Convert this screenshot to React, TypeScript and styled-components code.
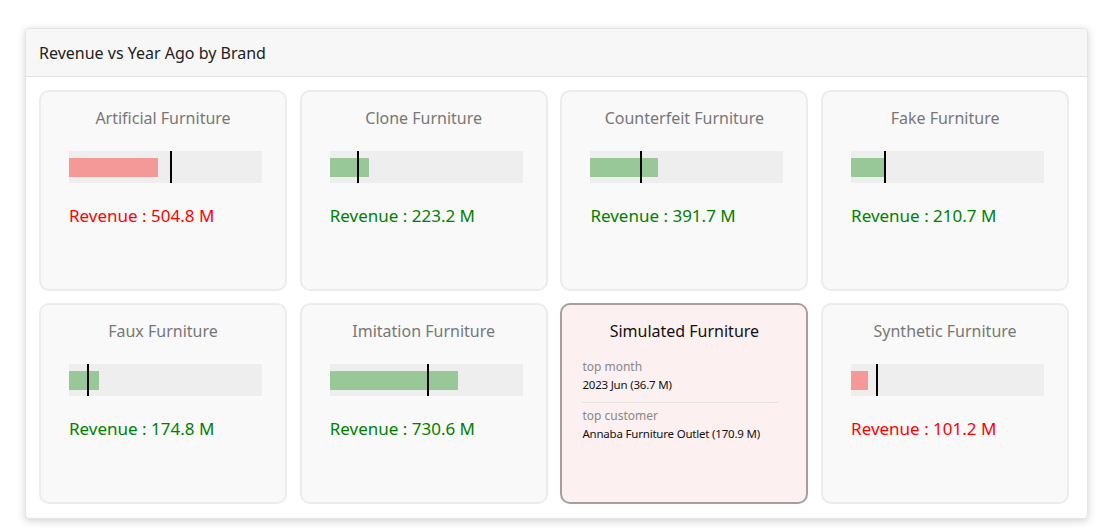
import React from "react";
import styled, { createGlobalStyle } from "styled-components";

const Global = createGlobalStyle`
  body { margin: 0; background: #fff; font-family: "Segoe UI", "Noto Sans", "Open Sans", sans-serif; }
`;

const Page = styled.div`
  padding: 28px 15px 10px 25px;
`;
const Panel = styled.div`
  width: 1061px;
  border: 1px solid #e4e4e4;
  border-radius: 4px;
  background: #fff;
  box-shadow: 0 2px 8px rgba(0,0,0,0.18);
`;
const Header = styled.div`
  height: 47px;
  display: flex;
  align-items: center;
  padding-left: 13px;
  font-size: 16px;
  color: #222;
  background: #f7f7f7;
  border-bottom: 1px solid #e2e2e2;
  border-radius: 4px 4px 0 0;
`;
const Grid = styled.div`
  display: grid;
  grid-template-columns: repeat(4, 248px);
  grid-auto-rows: 201px;
  column-gap: 12.7px;
  row-gap: 12px;
  padding: 13px 13px 14px 13px;
`;
const Card = styled.div<{ $hl?: boolean }>`
  border: 2px solid ${p => (p.$hl ? "#a99e9e" : "#ececec")};
  border-radius: 10px;
  background: ${p => (p.$hl ? "#fdf0f0" : "#f9f9f9")};
  padding: 0 ${p => (p.$hl ? "20px" : "28px")};
  box-sizing: border-box;
  display: flex;
  flex-direction: column;
`;
const Title = styled.div<{ $hl?: boolean }>`
  text-align: center;
  margin-top: 15px;
  font-size: 16px;
  color: ${p => (p.$hl ? "#111" : "#777")};
`;
const Track = styled.div`
  position: relative;
  width: 193px;
  height: 32px;
  background: #eeeeee;
  margin-top: 22px;
`;
const Fill = styled.div<{ $bad: boolean }>`
  position: absolute;
  left: 0;
  top: 7px;
  height: 19px;
  background: ${p => (p.$bad ? "#f49898" : "#98c898")};
`;
const Marker = styled.div`
  position: absolute;
  top: 0;
  width: 2px;
  height: 32px;
  background: #000;
`;
const Revenue = styled.div<{ $bad: boolean }>`
  margin-top: 21px;
  font-size: 17px;
  color: ${p => (p.$bad ? "#ff0000" : "#008000")};
`;
const Label = styled.div<{ $top: number }>`
  font-size: 12px;
  color: #888;
  margin-top: ${p => p.$top}px;
`;
const Value = styled.div`
  font-size: 11.5px;
  letter-spacing: -0.2px;
  white-space: nowrap;
  color: #111;
  margin-top: 2px;
`;
const Sep = styled.div`
  height: 1px;
  background: #e4e4e4;
  margin: 10px 8px 0 0;
`;

const data = [
  ["Artificial Furniture", 89, 102, "504.8", true],
  ["Clone Furniture", 39, 28, "223.2", false],
  ["Counterfeit Furniture", 68, 51, "391.7", false],
  ["Fake Furniture", 34, 34, "210.7", false],
  ["Faux Furniture", 30, 19, "174.8", false],
  ["Imitation Furniture", 128, 98, "730.6", false],
  null,
  ["Synthetic Furniture", 17, 26, "101.2", true],
] as const;

export default function App() {
  return (
    <Page>
      <Global />
      <Panel>
        <Header>Revenue vs Year Ago by Brand</Header>
        <Grid>
          {data.map((d, i) =>
            d === null ? (
              <Card key={i} $hl>
                <Title $hl>Simulated Furniture</Title>
                <Label $top={16}>top month</Label>
                <Value>2023 Jun (36.7 M)</Value>
                <Sep />
                <Label $top={4}>top customer</Label>
                <Value>Annaba Furniture Outlet (170.9 M)</Value>
              </Card>
            ) : (
              <Card key={i}>
                <Title>{d[0]}</Title>
                <Track>
                  <Fill $bad={d[4]} style={{ width: d[1] }} />
                  <Marker style={{ left: d[2] - 1 }} />
                </Track>
                <Revenue $bad={d[4]}>Revenue : {d[3]} M</Revenue>
              </Card>
            )
          )}
        </Grid>
      </Panel>
    </Page>
  );
}
